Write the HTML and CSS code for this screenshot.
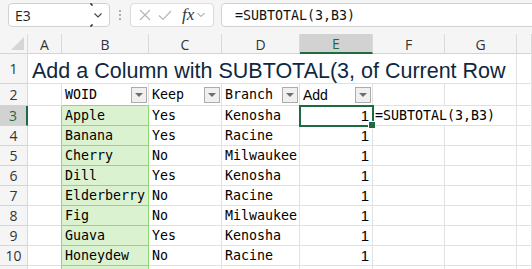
FILE: index.html
```html
<!DOCTYPE html>
<html>
<head>
<meta charset="utf-8">
<link rel="stylesheet" href="styles.css">
</head>
<body>
<div class="app">
  <div class="fbar">
    <div class="namebox">
      <span class="ref">E3</span>
      <span class="nb-drop">
        <svg width="20" height="24" viewBox="0 0 20 24"><path d="M2 1 H4 V3 M2 23 H4 V21" fill="none" stroke="#000" stroke-width="1"/><path d="M6.5 10.5 L10 14 L13.5 10.5" fill="none" stroke="#444" stroke-width="1.1"/></svg>
      </span>
    </div>
    <div class="grip"><svg width="4" height="12" viewBox="0 0 4 12"><circle cx="2" cy="2" r="1" fill="#999"/><circle cx="2" cy="6" r="1" fill="#999"/><circle cx="2" cy="10" r="1" fill="#999"/></svg></div>
    <div class="fxbox">
      <svg class="ico" width="14" height="14" viewBox="0 0 14 14"><path d="M2 2 L12 12 M12 2 L2 12" stroke="#b4b4b4" stroke-width="1.1" fill="none"/></svg>
      <svg class="ico" width="16" height="14" viewBox="0 0 16 14"><path d="M2 7.5 L6 11.5 L14 3" stroke="#b4b4b4" stroke-width="1.1" fill="none"/></svg>
      <span class="fx">fx</span>
      <svg class="ico" width="10" height="8" viewBox="0 0 10 8"><path d="M1.5 2 L5 5.5 L8.5 2" stroke="#8a8a8a" stroke-width="1" fill="none"/></svg>
    </div>
    <div class="formula">=SUBTOTAL(3,B3)</div>
  </div>

  <div class="sheet">
    <div class="ch corner"><span class="tri"></span></div>
    <div class="ch">A</div>
    <div class="ch">B</div>
    <div class="ch">C</div>
    <div class="ch">D</div>
    <div class="ch sel">E</div>
    <div class="ch">F</div>
    <div class="ch">G</div>
    <div class="ch"></div>

    <div class="rh">1</div>
    <div class="c title">Add a Column with SUBTOTAL(3, of Current Row</div>
    <div class="c"></div>

    <div class="rh">2</div>
    <div class="c"></div>
    <div class="c hd bhd"><span class="mono">WOID</span><span class="fbtn"><i></i></span></div>
    <div class="c hd"><span class="mono">Keep</span><span class="fbtn"><i></i></span></div>
    <div class="c hd"><span class="mono">Branch</span><span class="fbtn"><i></i></span></div>
    <div class="c hd"><span class="sans">Add</span><span class="fbtn"><i></i></span></div>
    <div class="c"></div>
    <div class="c"></div>
    <div class="c"></div>

    <div class="rh rsel">3</div>
    <div class="c ga"></div>
    <div class="c b mono">Apple</div>
    <div class="c mono">Yes</div>
    <div class="c mono">Kenosha</div>
    <div class="c num active">1</div>
    <div class="c mono over">=SUBTOTAL(3,B3)</div>
    <div class="c"></div>

    <div class="rh">4</div>
    <div class="c ga"></div>
    <div class="c b mono">Banana</div>
    <div class="c mono">Yes</div>
    <div class="c mono">Racine</div>
    <div class="c num">1</div>
    <div class="c"></div>
    <div class="c"></div>
    <div class="c"></div>

    <div class="rh">5</div>
    <div class="c ga"></div>
    <div class="c b mono">Cherry</div>
    <div class="c mono">No</div>
    <div class="c mono">Milwaukee</div>
    <div class="c num">1</div>
    <div class="c"></div>
    <div class="c"></div>
    <div class="c"></div>

    <div class="rh">6</div>
    <div class="c ga"></div>
    <div class="c b mono">Dill</div>
    <div class="c mono">Yes</div>
    <div class="c mono">Kenosha</div>
    <div class="c num">1</div>
    <div class="c"></div>
    <div class="c"></div>
    <div class="c"></div>

    <div class="rh">7</div>
    <div class="c ga"></div>
    <div class="c b mono">Elderberry</div>
    <div class="c mono">No</div>
    <div class="c mono">Racine</div>
    <div class="c num">1</div>
    <div class="c"></div>
    <div class="c"></div>
    <div class="c"></div>

    <div class="rh">8</div>
    <div class="c ga"></div>
    <div class="c b mono">Fig</div>
    <div class="c mono">No</div>
    <div class="c mono">Milwaukee</div>
    <div class="c num">1</div>
    <div class="c"></div>
    <div class="c"></div>
    <div class="c"></div>

    <div class="rh">9</div>
    <div class="c ga"></div>
    <div class="c b mono">Guava</div>
    <div class="c mono">Yes</div>
    <div class="c mono">Kenosha</div>
    <div class="c num">1</div>
    <div class="c"></div>
    <div class="c"></div>
    <div class="c"></div>

    <div class="rh">10</div>
    <div class="c ga"></div>
    <div class="c b mono">Honeydew</div>
    <div class="c mono">No</div>
    <div class="c mono">Racine</div>
    <div class="c num">1</div>
    <div class="c"></div>
    <div class="c"></div>
    <div class="c"></div>

    <div class="rh"></div>
    <div class="c ga"></div>
    <div class="c b"></div>
    <div class="c"></div>
    <div class="c"></div>
    <div class="c"></div>
    <div class="c"></div>
    <div class="c"></div>
    <div class="c"></div>
  </div>
</div>
</body>
</html>
```
FILE: styles.css
```css
* { box-sizing: border-box; }
html, body { margin: 0; padding: 0; background: #fff; overflow: hidden; }
.app { width: 532px; height: 269px; overflow: hidden; font-family: "Segoe UI", "Open Sans", "Liberation Sans", sans-serif; }

.fbar {
  height: 34px;
  background: #f5f5f5;
  display: flex;
  align-items: flex-start;
  padding: 3px 0 0 8px;
}
.namebox {
  width: 102px;
  height: 24px;
  background: #fff;
  border: 1px solid #d1d1d1;
  border-radius: 4px;
  display: flex;
  align-items: center;
  justify-content: space-between;
  padding-left: 6px;
}
.ref { font-size: 14px; color: #222; font-family: "Open Sans", "Liberation Sans", sans-serif; }
.nb-drop { display: flex; height: 22px; align-items: center; margin-right: 1px; }
.nb-drop svg { display: block; margin-top: -1px; }
.grip { width: 20px; height: 24px; display: flex; align-items: center; justify-content: center; }
.fxbox {
  width: 84px;
  height: 24px;
  background: #fff;
  border: 1px solid #dcdcdc;
  border-radius: 4px;
  display: flex;
  align-items: center;
  padding-left: 7px;
  gap: 5px;
}
.ico { display: block; }
.fx { font-family: "Liberation Serif", "DejaVu Serif", serif; font-style: italic; font-size: 17px; color: #333; margin-left: 4px; margin-right: -3px; }
.formula {
  flex: 1;
  height: 24px;
  margin-left: 7px;
  margin-right: -6px;
  background: #fff;
  border: 1px solid #d1d1d1;
  border-radius: 4px;
  font-family: "DejaVu Sans Mono", "Liberation Mono", monospace;
  font-size: 13.3px;
  color: #111;
  display: flex;
  align-items: center;
  padding-left: 13px;
}

.sheet {
  display: grid;
  grid-template-columns: 28px 34px 87px 73px 78px 73px 72px 72px 15px;
  grid-template-rows: 20px 30px 22px repeat(8, 20px) 20px;
}
.ch, .rh {
  background: #f5f5f5;
  border-right: 1px solid #d9d9d9;
  border-bottom: 1px solid #d4d4d4;
  font-size: 14px;
  color: #333;
  display: flex;
  align-items: center;
  justify-content: center;
  font-family: "Open Sans", "Liberation Sans", sans-serif;
}
.ch { padding-top: 1px; }
.corner { position: relative; }
.tri {
  position: absolute;
  right: 3px;
  bottom: 3px;
  width: 0; height: 0;
  border-left: 13px solid transparent;
  border-bottom: 13px solid #d6d6d6;
}
.ch.sel {
  background: #d2d2d2;
  color: #1e6b41;
  border-bottom: 2px solid #1e6b41;
}
.rh.rsel {
  background: #d2d2d2;
  color: #1e6b41;
  border-right: 2px solid #1e6b41;
}
.c {
  border-right: 1px solid #e1e1e1;
  border-bottom: 1px solid #e1e1e1;
  display: flex;
  align-items: center;
  padding: 0 3px;
  white-space: nowrap;
  color: #000;
  font-size: 13.3px;
}
.mono, .c.mono { font-family: "DejaVu Sans Mono", "Liberation Mono", monospace; font-size: 13.3px; }
.sans { font-family: "Liberation Sans", Arial, sans-serif; font-size: 14px; }
.title {
  grid-column: 2 / 9;
  font-family: "Liberation Sans", Arial, sans-serif;
  font-size: 21.5px;
  color: #0e2841;
  padding-left: 4px;
  padding-top: 5px;
}
.hd { padding-right: 1px; }
.fbtn {
  margin-left: auto;
  width: 16px;
  height: 16px;
  border: 1px solid #acacac;
  background: #f0f0f0;
  display: flex;
  align-items: center;
  justify-content: center;
}
.fbtn i {
  display: block;
  width: 0; height: 0;
  border-left: 4px solid transparent;
  border-right: 4px solid transparent;
  border-top: 4px solid #6e6e6e;
}
.bhd { border-bottom-color: #8ed973; }
.ga { border-right-color: #8ed973; }
.b {
  background: #daf2d0;
  border-right-color: #8ed973;
  border-bottom-color: #8ed973;
}
.num {
  justify-content: flex-end;
  font-family: "Liberation Sans", Arial, sans-serif;
  font-size: 15px;
  padding-right: 3px;
}
.active {
  position: relative;
  outline: 2px solid #1e6b41;
  outline-offset: -1px;
  z-index: 2;
}
.active::after {
  content: "";
  position: absolute;
  right: -4px;
  bottom: -4px;
  width: 6px;
  height: 6px;
  background: #1e6b41;
  border: 1px solid #fff;
}
.over { grid-column: span 2; padding-left: 2px; }
```
